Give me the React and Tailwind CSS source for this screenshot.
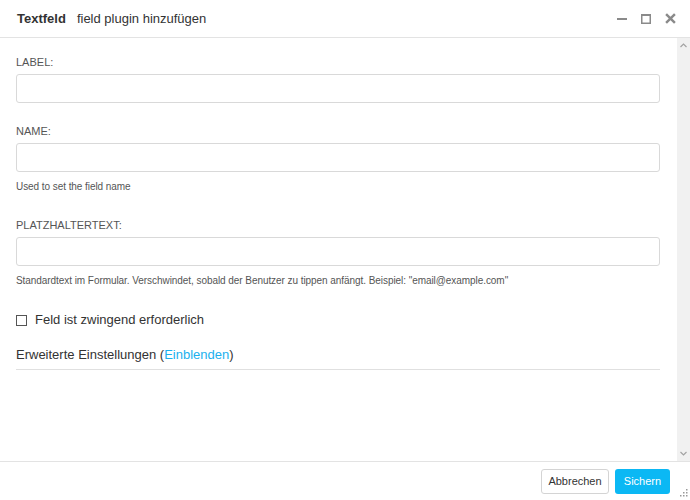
import { useState } from 'react';

function Field({ label, help }) {
  return (
    <div className="flex flex-col">
      <label className="mb-[5px] text-[11px] leading-[14px] text-[#555]">{label}</label>
      <input
        type="text"
        className="h-[29px] w-full rounded-[3px] border border-[#d9d9d9] bg-white px-2 text-[13px] outline-none"
      />
      {help && <p className="mt-[9px] text-[10px] leading-[12px] tracking-[-0.06px] text-[#555]">{help}</p>}
    </div>
  );
}

function App() {
  const [required, setRequired] = useState(false);

  return (
    <div
      className="flex h-[500px] w-[690px] flex-col overflow-hidden bg-white text-[#333]"
      style={{ fontFamily: '"Liberation Sans", Arial, sans-serif' }}
    >
      <div className="flex h-[38px] shrink-0 items-center border-b border-[#e3e3e3] pl-[17px] pr-[14px]">
        <span className="text-[13px] font-bold">Textfeld</span>
        <span className="ml-[11px] text-[13px]">field plugin hinzufügen</span>
        <div className="ml-auto flex items-center gap-[14px] text-[#8a8a8a]">
          <svg width="10" height="10" viewBox="0 0 10 10">
            <rect x="0" y="4" width="10" height="2" fill="currentColor" />
          </svg>
          <svg width="10" height="10" viewBox="0 0 10 10">
            <rect x="0.75" y="0.75" width="8.5" height="8.5" fill="none" stroke="currentColor" strokeWidth="1.5" />
            <rect x="0" y="0" width="10" height="2" fill="currentColor" />
          </svg>
          <svg width="11" height="11" viewBox="0 0 10 10">
            <path d="M1 1 L9 9 M9 1 L1 9" stroke="currentColor" strokeWidth="2.2" />
          </svg>
        </div>
      </div>

      <div className="flex min-h-0 flex-1">
        <div className="flex flex-1 flex-col pl-4 pr-[17px] pt-[17px]">
          <Field label="LABEL:" />
          <div className="mt-[21px]">
            <Field label="NAME:" help="Used to set the field name" />
          </div>
          <div className="mt-[25px]">
            <Field
              label="PLATZHALTERTEXT:"
              help={'Standardtext im Formular. Verschwindet, sobald der Benutzer zu tippen anfängt. Beispiel: "email@example.com"'}
            />
          </div>
          <label className="mt-[25px] flex cursor-pointer items-center text-[13px] leading-[16px]">
            <span
              onClick={() => setRequired(!required)}
              className="mr-[8px] flex h-[11px] w-[11px] items-center justify-center border border-[#555] bg-white"
            >
              {required && <span className="h-[5px] w-[5px] bg-[#555]" />}
            </span>
            Feld ist zwingend erforderlich
          </label>
          <div className="mt-[19px] border-b border-[#e0e0e0] pb-[6px] text-[13px] leading-[16px]">
            Erweiterte Einstellungen (<a href="#" className="text-[#1bb0ee]">Einblenden</a>)
          </div>
        </div>
        <div className="flex w-[13px] shrink-0 flex-col items-center justify-between bg-[#f1f1f1] py-[5px]">
          <svg width="7" height="5" viewBox="0 0 7 5">
            <path d="M0.5 4 L3.5 1 L6.5 4" fill="none" stroke="#a3a3a3" strokeWidth="1.2" />
          </svg>
          <svg width="7" height="5" viewBox="0 0 7 5">
            <path d="M0.5 1 L3.5 4 L6.5 1" fill="none" stroke="#a3a3a3" strokeWidth="1.2" />
          </svg>
        </div>
      </div>

      <div className="relative flex h-[39px] shrink-0 items-center justify-end gap-[6px] border-t border-[#e3e3e3] pr-[20px]">
        <button className="h-[25px] w-[68px] rounded-[3px] border border-[#d4d4d4] bg-white text-[11px] text-[#333]">
          Abbrechen
        </button>
        <button className="h-[25px] w-[55px] rounded-[3px] bg-[#0bb8f4] text-[11px] text-white">
          Sichern
        </button>
        <svg className="absolute bottom-[3px] right-[2px]" width="9" height="9" viewBox="0 0 9 9">
          <rect x="7" y="1" width="1.5" height="1.5" fill="#999" />
          <rect x="4" y="4" width="1.5" height="1.5" fill="#999" />
          <rect x="7" y="4" width="1.5" height="1.5" fill="#999" />
          <rect x="1" y="7" width="1.5" height="1.5" fill="#999" />
          <rect x="4" y="7" width="1.5" height="1.5" fill="#999" />
          <rect x="7" y="7" width="1.5" height="1.5" fill="#999" />
        </svg>
      </div>
    </div>
  );
}

export default App;
